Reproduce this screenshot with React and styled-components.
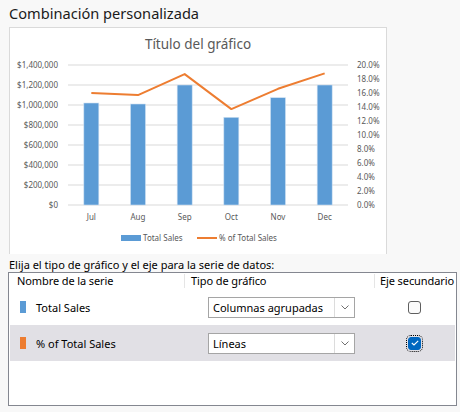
import React from "react";
import styled, { createGlobalStyle } from "styled-components";

const GlobalStyle = createGlobalStyle`
  body {
    margin: 0;
    background: #f8f8f8;
    font-family: "Noto Sans", "Open Sans", sans-serif;
    color: #000;
  }
`;

const Page = styled.div`
  width: 460px;
  height: 412px;
  overflow: hidden;
`;

const Heading = styled.h2`
  margin: 0;
  padding: 2px 0 0 9px;
  height: 25px;
  font-size: 14.6px;
  font-weight: normal;
  line-height: 22px;
  color: #1b1b1b;
`;

const ChartPanel = styled.div`
  margin-left: 9px;
  width: 378px;
  height: 227px;
  box-sizing: border-box;
  background: #fff;
  border: 1px solid #dadada;
  border-bottom: none;
  svg {
    display: block;
    font-family: "Noto Sans", sans-serif;
  }
`;

const Prompt = styled.div`
  padding: 4px 0 0 9px;
  height: 14px;
  font-size: 11px;
  line-height: 14px;
`;

const Table = styled.div`
  margin: 0 0 0 8px;
  width: 449px;
  height: 134px;
  box-sizing: border-box;
  border: 1px solid #848790;
  background: #fff;
  padding: 0 1px;
`;

const Grid = styled.div`
  display: grid;
  grid-template-columns: 174px 190px 1fr;
  align-items: center;
`;

const HeaderRow = styled(Grid)`
  height: 16px;
  font-size: 11px;
`;

const HeaderCell = styled.div`
  padding-left: ${(p) => p.$pad}px;
  border-left: ${(p) => (p.$sep ? "1px solid #e5e5e5" : "none")};
  height: 14px;
  line-height: 14px;
  white-space: nowrap;
  letter-spacing: -0.1px;
`;

const Row = styled(Grid)`
  height: 36px;
  background: ${(p) => (p.$selected ? "#e1e0e5" : "transparent")};
  font-size: 11px;
`;

const NameCell = styled.div`
  display: flex;
  align-items: center;
  padding-left: 10px;
  gap: 10px;
`;

const Marker = styled.span`
  width: 6px;
  height: 12px;
  background: ${(p) => p.$color};
`;

const Select = styled.div`
  margin-left: 24px;
  width: 147px;
  height: 21px;
  box-sizing: border-box;
  border: 1px solid #a5a5a5;
  background: #fff;
  display: flex;
  align-items: stretch;
`;

const SelectText = styled.span`
  flex: 1;
  padding-left: 4px;
  line-height: 19px;
`;

const SelectButton = styled.span`
  width: 19px;
  border-left: 1px solid #dcdcdc;
  display: flex;
  align-items: center;
  justify-content: center;
`;

const CheckCell = styled.div`
  display: flex;
  justify-content: center;
`;

const Checkbox = styled.span`
  width: 13px;
  height: 13px;
  box-sizing: border-box;
  border-radius: 3px;
  border: 1px solid ${(p) => (p.$checked ? "#0067c0" : "#5f5f5f")};
  background: ${(p) => (p.$checked ? "#0067c0" : "#fbfbfb")};
  outline: ${(p) => (p.$checked ? "1px dotted #000" : "none")};
  outline-offset: 1px;
  display: flex;
  align-items: center;
  justify-content: center;
`;

const months = ["Jul", "Aug", "Sep", "Oct", "Nov", "Dec"];
const sales = [1020000, 1010000, 1200000, 877000, 1073000, 1200000];
const pct = [16.0, 15.7, 18.7, 13.7, 16.6, 18.8];
const leftLabels = [
  "$0",
  "$200,000",
  "$400,000",
  "$600,000",
  "$800,000",
  "$1,000,000",
  "$1,200,000",
  "$1,400,000",
];

// page coords shifted by the panel's inner origin (10, 28)
const OX = 10;
const OY = 28;
const plotL = 68 - OX;
const plotR = 348 - OX;
const base = 205 - OY;
const cat = (plotR - plotL) / 6;
const AXIS = { fontSize: 8, fill: "#595959" };

function Chart() {
  const right = [0, 2, 4, 6, 8, 10, 12, 14, 16, 18, 20];
  const pts = pct
    .map((v, i) => `${plotL + cat * (i + 0.5)},${base - (v / 20) * 140}`)
    .join(" ");
  return (
    <svg width="376" height="226" viewBox="0 0 376 226">
      <text x={198 - OX} y={49 - OY} fontSize="13.5" fill="#595959" textAnchor="middle">
        Título del gráfico
      </text>
      {leftLabels.map((label, i) => (
        <g key={label}>
          <line x1={plotL} x2={plotR} y1={base - i * 20} y2={base - i * 20} stroke="#d9d9d9" strokeWidth="1" />
          <text x={58 - OX} y={base - i * 20 + 3} textAnchor="end" {...AXIS}>
            {label}
          </text>
        </g>
      ))}
      {right.map((v, i) => (
        <text key={v} x={357 - OX} y={base - i * 14 + 3} {...AXIS}>
          {v.toFixed(1)}%
        </text>
      ))}
      {sales.map((v, i) => {
        const h = v / 10000;
        return (
          <rect key={i} x={plotL + cat * (i + 0.5) - 7.5} y={base - h} width="15" height={h} fill="#5b9bd5" stroke="#cfe1f2" strokeWidth="0.6" />
        );
      })}
      <polyline points={pts} fill="none" stroke="#ed7d31" strokeWidth="2" strokeLinejoin="round" />
      {months.map((m, i) => (
        <text key={m} x={plotL + cat * (i + 0.5)} y={220 - OY} textAnchor="middle" {...AXIS}>
          {m}
        </text>
      ))}
      <rect x={121 - OX} y={235 - OY} width="20" height="6" fill="#5b9bd5" />
      <text x={143 - OX} y={241 - OY} {...AXIS}>Total Sales</text>
      <line x1={197 - OX} x2={217 - OX} y1={238 - OY} y2={238 - OY} stroke="#ed7d31" strokeWidth="2" />
      <text x={219 - OX} y={241 - OY} {...AXIS}>% of Total Sales</text>
    </svg>
  );
}

function Chevron() {
  return (
    <svg width="8" height="5" viewBox="0 0 8 5">
      <path d="M0.5 0.5 L4 4 L7.5 0.5" fill="none" stroke="#606060" strokeWidth="0.9" />
    </svg>
  );
}

function Tick() {
  return (
    <svg width="8" height="6" viewBox="0 0 8 6">
      <path d="M0.8 3 L3 5 L7.2 0.8" fill="none" stroke="#fff" strokeWidth="1.1" />
    </svg>
  );
}

const series = [
  { name: "Total Sales", color: "#5b9bd5", type: "Columnas agrupadas", secondary: false },
  { name: "% of Total Sales", color: "#ed7d31", type: "Líneas", secondary: true },
];

export default function App() {
  return (
    <Page>
      <GlobalStyle />
      <Heading>Combinación personalizada</Heading>
      <ChartPanel>
        <Chart />
      </ChartPanel>
      <Prompt>Elija el tipo de gráfico y el eje para la serie de datos:</Prompt>
      <Table>
        <HeaderRow>
          <HeaderCell $pad={7}>Nombre de la serie</HeaderCell>
          <HeaderCell $pad={6} $sep>Tipo de gráfico</HeaderCell>
          <HeaderCell $pad={5} $sep>Eje secundario</HeaderCell>
        </HeaderRow>
        {series.map((s) => (
          <Row key={s.name} $selected={s.secondary}>
            <NameCell>
              <Marker $color={s.color} />
              {s.name}
            </NameCell>
            <Select>
              <SelectText>{s.type}</SelectText>
              <SelectButton>
                <Chevron />
              </SelectButton>
            </Select>
            <CheckCell>
              <Checkbox $checked={s.secondary}>{s.secondary && <Tick />}</Checkbox>
            </CheckCell>
          </Row>
        ))}
      </Table>
    </Page>
  );
}
